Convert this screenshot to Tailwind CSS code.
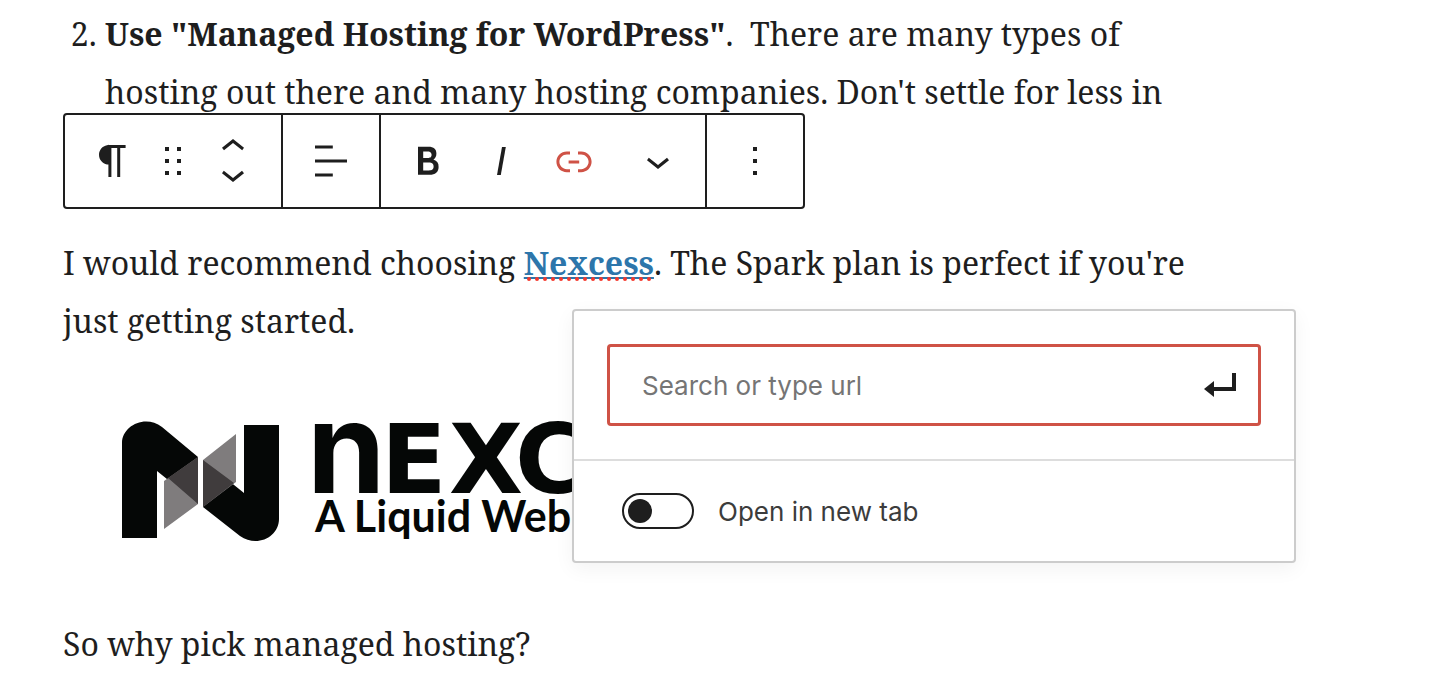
<!DOCTYPE html>
<html lang="en">
<head>
  <meta charset="UTF-8">
  <meta name="viewport" content="width=device-width, initial-scale=1.0">
  <title>Edit Post</title>
  <script src="https://cdn.jsdelivr.net/npm/@tailwindcss/browser@4"></script>
</head>
<body class="bg-white text-[#1e1e1e] overflow-x-hidden">
  <main class="px-[63px] pt-[5px] pb-4 font-['Noto_Serif','Droid_Serif','DejaVu_Serif_Condensed',serif] text-[32px] leading-[58px]">
    <ol start="2" class="list-decimal pl-[42px] max-w-[1130px]">
      <li><strong>Use "Managed Hosting for WordPress"</strong>.&nbsp; There are many types of hosting out there and many hosting companies. Don't settle for less in</li>
    </ol>

    <div class="relative mt-[113px]">
      <!-- Block toolbar -->
      <div role="toolbar" aria-label="Block tools" class="absolute left-0 bottom-full mb-[25px] flex h-24 rounded-sm border-2 border-[#1e1e1e] bg-white">
        <div class="flex items-center gap-3 px-6 border-r-2 border-[#1e1e1e]">
          <button aria-label="Paragraph" class="size-12"><svg class="size-12" viewBox="0 0 24 24" fill="currentColor"><path d="M18.3 4H9.9v-.1l-.9.2c-2.3.4-4 2.4-4 4.8s1.7 4.4 4 4.8l.7.1V20h1.5V5.5h2.9V20h1.5V5.5h2.7V4z"/></svg></button>
          <button aria-label="Drag" class="size-12"><svg class="size-12" viewBox="0 0 24 24" fill="currentColor"><path d="M8 7h2V5H8v2zm0 6h2v-2H8v2zm0 6h2v-2H8v2zm6-14v2h2V5h-2zm0 8h2v-2h-2v2zm0 6h2v-2h-2v2z"/></svg></button>
          <div class="flex flex-col">
            <button aria-label="Move up" class="w-12 h-8"><svg class="w-12 h-8" viewBox="0 3 24 16" fill="currentColor"><path d="M6.5 12.4L12 8l5.5 4.4-.9 1.2L12 10l-4.5 3.6-1-1.2z"/></svg></button>
            <button aria-label="Move down" class="w-12 h-8"><svg class="w-12 h-8" viewBox="0 5.5 24 16" fill="currentColor"><path d="M17.5 11.6L12 16l-5.5-4.4.9-1.2L12 14l4.5-3.6 1 1.2z"/></svg></button>
          </div>
        </div>
        <div class="flex items-center px-6 border-r-2 border-[#1e1e1e]">
          <button aria-label="Align" class="size-12"><svg class="size-12" viewBox="0 0 24 24" fill="currentColor"><path d="M4 19.8h8.9v-1.5H4v1.5zm8.9-15.6H4v1.5h8.9V4.2zm-8.9 7v1.5h16v-1.5H4z"/></svg></button>
        </div>
        <div class="flex items-center gap-[25px] px-[23px] border-r-2 border-[#1e1e1e]">
          <button aria-label="Bold" class="size-12"><svg class="size-12" viewBox="0 0 24 24" fill="currentColor"><path d="M14.7 11.3c1-.6 1.5-1.6 1.5-3 0-2.3-1.3-3.4-4-3.4H7v14h5.8c1.4 0 2.5-.3 3.3-1 .8-.7 1.2-1.7 1.2-2.9.1-1.9-.8-3.1-2.6-3.7zm-5.1-4h2.3c.6 0 1.1.1 1.4.4.3.3.5.7.5 1.2s-.2 1-.5 1.2c-.3.3-.8.4-1.4.4H9.6V7.3zm4.6 9c-.4.3-1 .4-1.7.4H9.6v-3.9h2.9c.7 0 1.3.2 1.7.5.4.3.6.8.6 1.5s-.2 1.2-.6 1.5z"/></svg></button>
          <button aria-label="Italic" class="size-12"><svg class="size-12" viewBox="0 0 24 24" fill="currentColor"><path d="M12.5 5L10 19h1.9l2.5-14z"/></svg></button>
          <button aria-label="Link" class="size-12 text-[#cf5246]"><svg class="size-12" viewBox="0 0 24 24" fill="currentColor"><path d="M15.6 7.2H14v1.5h1.6c2 0 3.7 1.7 3.7 3.7s-1.7 3.7-3.7 3.7H14v1.5h1.6c2.8 0 5.2-2.3 5.2-5.2 0-2.9-2.3-5.2-5.2-5.2zM4.7 12.4c0-2 1.7-3.7 3.7-3.7H10V7.2H8.4c-2.9 0-5.2 2.3-5.2 5.2 0 2.9 2.3 5.2 5.2 5.2H10v-1.5H8.4c-2 0-3.7-1.7-3.7-3.7zm4.6.9h5.3v-1.5H9.3v1.5z"/></svg></button>
          <button aria-label="More rich text controls" class="size-12 ml-[11px]"><svg class="size-12" viewBox="0 0 24 24" fill="currentColor"><path d="M17.5 11.6L12 16l-5.5-4.4.9-1.2L12 14l4.5-3.6 1 1.2z"/></svg></button>
        </div>
        <div class="flex items-center px-6">
          <button aria-label="More options" class="size-12"><svg class="size-12" viewBox="0 0 24 24" fill="currentColor"><path d="M13 19h-2v-2h2v2zm0-6h-2v-2h2v2zm0-6h-2V5h2v2z"/></svg></button>
        </div>
      </div>

      <p class="max-w-[1150px]">I would recommend choosing <a href="#" class="relative font-bold text-[#2d76ab] underline decoration-2 underline-offset-2">Nexcess<svg class="absolute left-0 bottom-[3px] w-full h-1" aria-hidden="true"><line x1="5" y1="2" x2="100%" y2="2" stroke="#f5382c" stroke-width="4" stroke-linecap="round" stroke-dasharray="0 8"/></svg></a>. The Spark plan is perfect if you're just getting started.</p>

      <!-- Link popover -->
      <form class="absolute left-[509px] top-[75px] w-[724px] rounded-sm border-2 border-[#ccc] bg-white shadow-[0_6px_20px_rgba(0,0,0,0.05)] font-[Inter,sans-serif] text-[26px] leading-8">
        <div class="p-[33px] border-b-2 border-[#ddd]">
          <div class="flex items-center h-[82px] rounded border-3 border-[#cf5246] pl-8 pr-[18px]">
            <input type="text" aria-label="URL" placeholder="Search or type url" class="flex-1 min-w-0 pt-0.5 outline-none placeholder:text-[#757575]">
            <button type="submit" aria-label="Submit" class="size-10"><svg class="size-10" viewBox="0 0 20 20" fill="currentColor"><path d="M16 4h2v9H7v3l-5-4 5-4v3h9V4z"/></svg></button>
          </div>
        </div>
        <div class="flex items-center gap-6 h-[100px] px-12">
          <input type="checkbox" id="new-tab" class="appearance-none flex items-center w-[72px] h-9 rounded-full border-2 border-[#1e1e1e] px-1 before:size-6 before:rounded-full before:bg-[#1e1e1e] checked:justify-end">
          <label for="new-tab" class="pt-0.5 text-[#3c3c3c]">Open in new tab</label>
        </div>
      </form>
    </div>

    <figure class="mt-[70px]">
      <svg class="w-[512px] h-[130px]" viewBox="63 420 512 130" role="img" aria-label="Nexcess, A Liquid Web Brand">
        <g fill="#050706">
          <path d="M122 538V443C122 426 145 414 162 427L198 457V504L157 471V538Z"/>
          <path d="M279 425V519C279 537 257 548 240 536L203 507V460L244 493V425Z"/>
        </g>
        <path fill="#7f7c7d" d="M164 481L198 457V504L164 529ZM236 434V482L203 507V460Z"/>
        <path fill="#403c3d" d="M168 478L198 457V504ZM203 460V507L234 483Z"/>
        <g fill="#050706">
          <text y="493" font-family="DejaVu Sans" font-weight="700" font-size="96"><tspan x="307" font-family="Inter" font-size="126">n</tspan><tspan x="381 449 515">EXC</tspan></text>
          <text x="315" y="532" font-family="Lato" font-weight="700" font-size="43">A Liquid Web</text>
        </g>
      </svg>
    </figure>

    <p class="mt-[65px]">So why pick managed hosting?</p>
  </main>
</body>
</html>
